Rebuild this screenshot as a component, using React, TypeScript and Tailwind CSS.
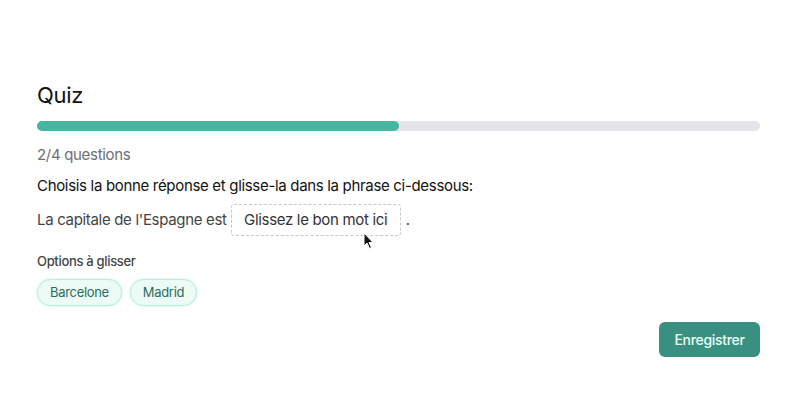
import React from "react";

const options = ["Barcelone", "Madrid"];

function Cursor() {
  return (
    <svg
      className="absolute left-[131px] top-[27px]"
      width="12"
      height="18"
      viewBox="0 0 12 18"
    >
      <path
        d="M1 1 L1 14 L4 11 L6.5 16.5 L8.5 15.5 L6 10.5 L10 10.5 Z"
        fill="#111"
        stroke="#fff"
        strokeWidth="1"
      />
    </svg>
  );
}

export default function App() {
  const answered = 2;
  const total = 4;

  return (
    <div className="min-h-[418px] w-[800px] bg-white font-['Inter','Noto_Sans',sans-serif] tracking-[-0.02em]">
      <div className="ml-[37px] w-[723px] pt-[81px]">
        {/* Header + progress */}
        <h1 className="text-[22px] leading-[28px] font-normal text-[#111]">Quiz</h1>
        <div className="mt-[12px] h-[10px] w-full rounded-full bg-[#e4e4e9]">
          <div
            className="h-full rounded-full bg-[#46b6a0]"
            style={{ width: `${(answered / total) * 100}%` }}
          />
        </div>
        <p className="mt-[14px] text-[15px] leading-[20px] text-[#6e6e73]">
          {answered}/{total} questions
        </p>

        {/* Question */}
        <p className="mt-[11px] text-[15px] leading-[20px] text-[#111]">
          Choisis la bonne réponse et glisse-la dans la phrase ci-dessous:
        </p>
        <div className="mt-[8px] flex items-center text-[15px] text-[#444]">
          <span>La capitale de l'Espagne est</span>
          <div className="relative ml-[4px] flex h-[32px] w-[170px] items-center justify-center rounded-[3px] border border-dashed border-[#c8c8c8] text-[#333]">
            Glissez le bon mot ici
            <Cursor />
          </div>
          <span className="ml-[5px]">.</span>
        </div>

        {/* Options */}
        <p className="mt-[16px] text-[13px] leading-[18px] font-medium text-[#444]">
          Options à glisser
        </p>
        <div className="mt-[9px] flex gap-[8px]">
          {options.map((o) => (
            <span
              key={o}
              className="flex h-[27px] items-center rounded-full border border-[#b5efe0] bg-[#ecfbf6] px-[12px] text-[13px] text-[#2d6b5d] shadow-[0_0_2px_rgba(120,220,200,0.5)]"
            >
              {o}
            </span>
          ))}
        </div>

        {/* Save */}
        <div className="mt-[16px] flex justify-end">
          <button className="h-[35px] w-[101px] rounded-[6px] bg-[#3a9080] text-[14px] font-medium text-[#eafff8]">
            Enregistrer
          </button>
        </div>
      </div>
    </div>
  );
}
